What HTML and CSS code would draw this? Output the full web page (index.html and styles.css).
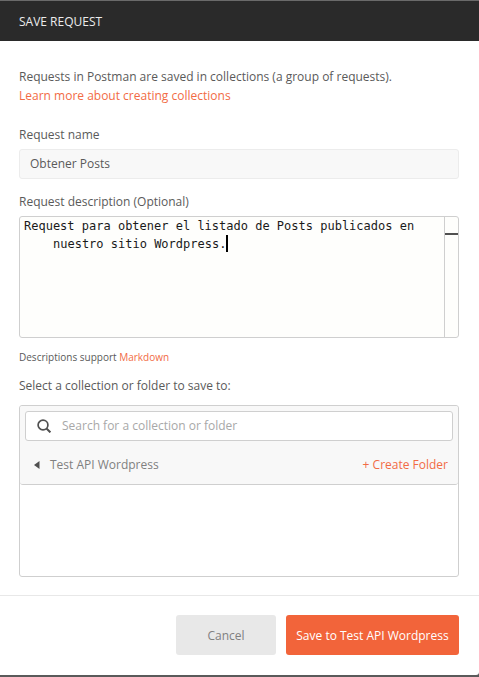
FILE: index.html
```html
<!DOCTYPE html>
<html lang="en">
<head>
<meta charset="utf-8">
<title>Save Request</title>
<link rel="stylesheet" href="styles.css">
</head>
<body>
<div class="modal">
  <header class="modal-header">SAVE REQUEST</header>
  <main class="modal-body">
    <p class="intro">Requests in Postman are saved in collections (a group of requests).<br><a class="link" href="#">Learn more about creating collections</a></p>
    <label class="label label-name">Request name</label>
    <div class="name-input">Obtener Posts</div>
    <label class="label label-desc">Request description (Optional)</label>
    <div class="editor">
      <div class="code">
        <div class="code-line">Request para obtener el listado de Posts publicados en</div>
        <div class="code-line code-wrapped">nuestro sitio Wordpress.<span class="caret"></span></div>
      </div>
      <div class="scrollbar"><span class="scroll-thumb"></span></div>
    </div>
    <p class="hint">Descriptions support <a class="link" href="#">Markdown</a></p>
    <label class="label label-select">Select a collection or folder to save to:</label>
    <div class="picker">
      <div class="picker-top">
        <div class="search">
          <svg class="search-icon" width="14" height="14" viewBox="0 0 14 14" fill="none"><circle cx="6" cy="6" r="4.9" stroke="#505050" stroke-width="1.7"/><path d="M9.5 9.5 13.4 13.4" stroke="#505050" stroke-width="2"/></svg>
          <span class="search-text">Search for a collection or folder</span>
        </div>
        <div class="crumb">
          <svg class="crumb-arrow" width="6" height="8" viewBox="0 0 6 8"><path d="M5.5 0v8L0 4z" fill="#505050"/></svg>
          <span class="crumb-name">Test API Wordpress</span>
          <a class="link create" href="#">+ Create Folder</a>
        </div>
      </div>
    </div>
  </main>
  <footer class="modal-footer">
    <button class="btn btn-cancel">Cancel</button>
    <button class="btn btn-save">Save to Test API Wordpress</button>
  </footer>
</div>
</body>
</html>
```

FILE: styles.css
```css
* { box-sizing: border-box; }
html, body { margin: 0; height: 100%; background: #5a5a5a; }
body { font-family: "Open Sans", sans-serif; font-size: 12px; color: #5a5a5a; overflow: hidden; }
.modal { height: 675px; background: #fff; border-bottom-right-radius: 3px; display: flex; flex-direction: column; }
.modal-header { height: 41px; background: #2a2a2a; border-top: 1px solid #6a6a6a; color: #ececec; padding: 1px 19px 0; line-height: 40px; }
.modal-body { flex: 1; padding: 26px 20px 0 19px; display: flex; flex-direction: column; }
.intro { margin: 0; line-height: 19px; }
.link { color: #f26b45; text-decoration: none; }
.label { display: block; line-height: 17px; }
.label-name { margin-top: 21px; }
.name-input { height: 30px; margin-top: 6px; background: #f8f8f8; border: 1px solid #ececec; border-radius: 3px; padding: 0 10px; line-height: 27px; }
.label-desc { margin-top: 14px; }
.editor { height: 122px; margin-top: 6px; border: 1px solid #cfcfcf; border-radius: 3px; background: #fefefc; display: flex; }
.code { flex: 1; padding: 0 4px; font-family: "DejaVu Sans Mono", monospace; font-size: 12px; line-height: 18px; color: #1a1a1a; }
.code-wrapped { padding-left: 29px; }
.caret { display: inline-block; width: 2px; height: 17px; background: #000; vertical-align: -4px; }
.scrollbar { width: 14px; border-left: 1px solid #cfcfcf; padding-top: 16px; }
.scroll-thumb { display: block; height: 2px; background: #505050; }
.hint { margin: 12px 0 0; font-size: 10px; line-height: 14px; }
.label-select { margin-top: 13px; }
.picker { height: 172px; margin-top: 11px; border: 1px solid #cfcfcf; border-radius: 3px; }
.picker-top { height: 79px; background: #f8f8f8; border-bottom: 1px solid #cfcfcf; border-radius: 3px; padding: 5px 5px 0; }
.search { height: 30px; background: #fff; border: 1px solid #cfcfcf; border-radius: 3px; display: flex; align-items: center; padding: 0 0 1px 11px; }
.search-icon { margin-right: 11px; }
.search-text { color: #a8a8a8; }
.crumb { height: 43px; padding: 4px 5px 0 9px; display: flex; align-items: center; color: #808080; }
.crumb-arrow { margin-right: 10px; }
.crumb-name { flex: 1; }
.modal-footer { height: 80px; border-top: 1px solid #e8e8e8; display: flex; justify-content: flex-end; gap: 10px; padding: 19px 20px 0 0; }
.btn { height: 40px; border: 0; border-radius: 3px; font-family: inherit; font-size: 12px; padding: 0; }
.btn-cancel { width: 100px; background: #e8e8e8; color: #808080; }
.btn-save { width: 173px; background: #f2643a; color: #fff; }
```
